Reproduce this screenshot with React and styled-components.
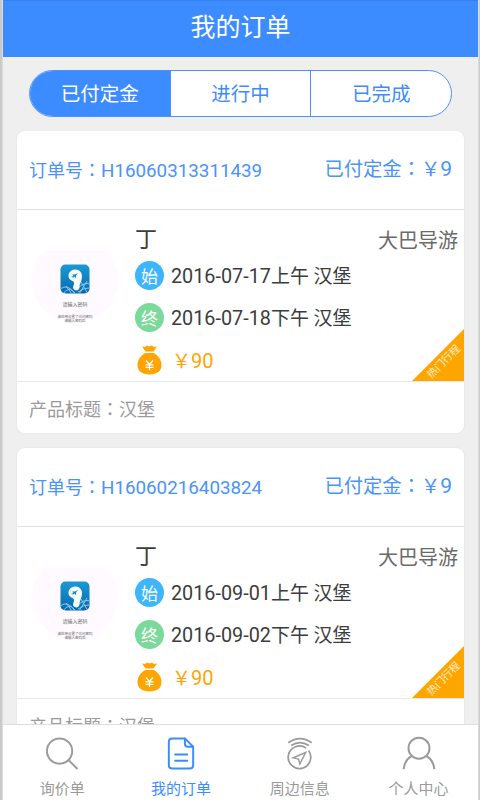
import React from 'react'
import styled, { createGlobalStyle, css } from 'styled-components'

const GlobalStyle = createGlobalStyle`
  * {
    box-sizing: border-box;
  }
  body {
    margin: 0;
    background-color: #c9c9c9;
    font-family: Roboto, "Noto Sans CJK SC", sans-serif;
  }
`
const Container = styled.div`
  width: 475px;
  height: 800px;
  margin-left: 3px;
  display: flex;
  flex-direction: column;
  overflow: hidden;
  background-color: #efefef;
  box-shadow: 0 0 1px 1px #dcdcdc;
`
const Header = styled.header`
  height: 57px;
  flex-shrink: 0;
  display: flex;
  align-items: center;
  justify-content: center;
  padding-bottom: 8px;
  border-top: 1px solid #3a80ec;
  background-color: #3c8cff;
  color: white;
  font-size: 25px;
`
const Tabs = styled.div`
  height: 47px;
  flex-shrink: 0;
  display: flex;
  margin: 13px 26px 14px;
  border: 1.5px solid #4a93fb;
  border-radius: 24px;
  overflow: hidden;
  background-color: white;
`
const Tab = styled.div`
  flex: 1;
  display: flex;
  align-items: center;
  justify-content: center;
  padding-bottom: 2px;
  font-size: 19.5px;
  color: #3c8cff;
  & + & {
    border-left: 1px solid #4a93fb;
  }
  ${props => props.$active && css`
    background-color: #3c8cff;
    color: white;
  `}
`
const Orders = styled.div`
  flex: 1;
  min-height: 0;
  overflow: hidden;
  padding: 0 14px;
`
const Card = styled.div`
  height: 302px;
  margin-bottom: 15px;
  border-radius: 8px;
  background-color: white;
  box-shadow: 0 0 1px 1px #e9e9e9;
`
const CardHead = styled.div`
  height: 79px;
  display: flex;
  align-items: center;
  justify-content: space-between;
  padding: 0 12px;
  border-bottom: 1px solid #e2e2e2;
  color: #4a93fb;
`
const OrderNo = styled.div`
  padding-bottom: 3px;
  font-size: 18px;
`
const Deposit = styled.div`
  font-size: 19.3px;
  padding-bottom: 5px;
`
const Colon = styled.span`
  font-family: "Noto Sans CJK TC", sans-serif;
`
const Num = styled.span`
  font-size: ${props => props.$size};
`
const CardBody = styled.div`
  position: relative;
  height: 172px;
  display: flex;
  border-bottom: 1px solid #e8e8e8;
`
const Avatar = styled.div`
  width: 86px;
  height: 86px;
  flex-shrink: 0;
  margin: 27px 17px 0 15px;
  padding-top: 27px;
  border-radius: 50%;
  display: flex;
  flex-direction: column;
  align-items: center;
  background: linear-gradient(white 14px, #fefaff 14px);
  svg {
    flex-shrink: 0;
  }
`
const AvatarText = styled.span`
  flex-shrink: 0;
  white-space: nowrap;
  line-height: ${props => props.$line};
  font-size: ${props => props.$size};
  margin-top: ${props => props.$top};
  color: #666;
`
const Details = styled.div`
  flex: 1;
  padding-top: 14px;
`
const NameRow = styled.div`
  height: 30px;
  display: flex;
  align-items: center;
  justify-content: space-between;
  padding: 0 6px 4px 0;
  font-size: 22px;
  color: #3c3c3c;
`
const Guide = styled.span`
  padding-top: 4px;
  font-size: 20px;
  color: #6a6a6a;
`
const Row = styled.div`
  height: 42.5px;
  display: flex;
  align-items: center;
  font-size: 19px;
  color: #3c3c3c;
`
const RowText = styled.span`
  padding-bottom: 2px;
`
const Badge = styled.span`
  width: 29px;
  height: 29px;
  margin-right: 7px;
  display: flex;
  align-items: center;
  justify-content: center;
  border-radius: 50%;
  font-size: 17px;
  color: white;
  background-color: ${props => props.$color};
`
const Price = styled.span`
  margin-left: 8px;
  padding-bottom: 2px;
  color: #ffa500;
`
const Ribbon = styled.div`
  position: absolute;
  right: 0;
  bottom: 0;
  width: 52px;
  height: 52px;
  background-color: #ffa500;
  clip-path: polygon(100% 0, 100% 100%, 0 100%);
`
const RibbonText = styled.span`
  position: absolute;
  left: 9px;
  top: 25px;
  width: 46px;
  line-height: 16px;
  text-align: center;
  font-size: 10.5px;
  color: #ffedcc;
  transform: rotate(-45deg);
`
const CardFoot = styled.div`
  height: 51px;
  display: flex;
  align-items: center;
  padding: 1px 12px 0;
  font-size: 18px;
  color: #9b9b9b;
`
const Nav = styled.nav`
  height: 76px;
  flex-shrink: 0;
  display: flex;
  border-top: 1px solid #dedede;
  background-color: white;
`
const NavItem = styled.div`
  flex: 1;
  display: flex;
  flex-direction: column;
  align-items: center;
  padding-top: 11px;
  font-size: 15px;
  line-height: 22px;
  color: ${props => props.$active ? '#3c8cff' : '#9a9a9a'};
  svg {
    margin-bottom: 7px;
  }
`

const AppLogo = () => (
  <svg width="30" height="30" viewBox="0 0 30 30">
    <defs>
      <linearGradient id="logoBg" x1="0" y1="0" x2="0" y2="1">
        <stop offset="0" stopColor="#1b9ad6" />
        <stop offset="1" stopColor="#0768ae" />
      </linearGradient>
      <clipPath id="logoClip">
        <rect x="0.5" y="0.5" width="29" height="29" rx="5" />
      </clipPath>
    </defs>
    <g clipPath="url(#logoClip)">
      <rect width="30" height="30" fill="url(#logoBg)" />
      <path d="M0 25q8-6 15 5M3 30q6-9 12-1M18 24q6-6 12-4M18 28q7-5 12-4M21 18l7 12M27 17l-8 13M6 22l6 8" fill="none" stroke="#8cc9e8" strokeWidth="1" />
      <path d="M8.500 12C8.500 8 11.500 5.500 15.500 5.500S22 8.500 22 12c0 5-2.500 8-2.500 11 0 2-1.500 3.500-3 3.500S13 25.500 13 23.500c0-2 1.500-3 1-5-.5-2-5.500-2-5.500-6.500z" fill="#f4fbfb" />
      <path d="M10.500 13l3-1.500-1.500-1 3 0 3-1.500-2 2.500 0 3-1.200-2-2.300 1.500.5-1.500z" fill="#1581c0" />
    </g>
  </svg>
)

const MoneyBag = () => (
  <svg width="29" height="30" viewBox="0 0 29 30">
    <path d="M7 1.500l3 .5 2-1.500 2.500 1 2.500-1 2 1.500 3-.5-3.500 5h-8z" fill="#ffa500" />
    <path d="M10 8h9c4.500 3 7.500 7 7.500 12 0 6-4.500 9.500-12 9.500s-12-3.500-12-9.500c0-5 3-9 7.500-12z" fill="#ffa500" />
    <path d="M11 15.500l3.500 4L18 15.500M10.500 19.800h8M10.500 22.300h8M14.500 19.500v5.500" fill="none" stroke="white" strokeWidth="1.300" />
  </svg>
)

const SearchIcon = () => (
  <svg width="36" height="36" viewBox="0 0 36 36" fill="none" stroke="currentColor" strokeWidth="2">
    <circle cx="15.500" cy="15.500" r="13" />
    <path d="M24.500 24.500l9.500 9.500" />
  </svg>
)

const OrderIcon = () => (
  <svg width="36" height="36" viewBox="0 0 36 36" fill="none" stroke="currentColor" strokeWidth="2" strokeLinejoin="round" strokeLinecap="round">
    <path d="M22 2.500H9Q5.500 2.500 5.500 6v24Q5.500 33.500 9 33.500h18Q30.500 33.500 30.500 30V11z" />
    <path d="M22 2.500V8q0 3 3 3h5.500M12 19h12.500M12 25.500h12.500" />
  </svg>
)

const NearbyIcon = () => (
  <svg width="36" height="36" viewBox="0 0 36 36" fill="none" stroke="currentColor" strokeWidth="1.800">
    <path d="M6 7q12-8.500 24 0M9 9.800q9-6 18 0" />
    <path d="M24.300 12.500A11.600 11.600 0 1 0 26.800 15" />
    <path d="M23.800 17L11 22.500l5.500 1.300 1.300 5z" strokeWidth="1.500" />
  </svg>
)

const UserIcon = () => (
  <svg width="36" height="36" viewBox="0 0 36 36" fill="none" stroke="currentColor" strokeWidth="2">
    <circle cx="18" cy="12.500" r="10.800" />
    <path d="M2.200 34Q3 25 10.500 20.500M33.800 34Q33 25 25.500 20.500" />
  </svg>
)

const orders = [
  { no: 'H16060313311439', start: '2016-07-17', end: '2016-07-18' },
  { no: 'H16060216403824', start: '2016-09-01', end: '2016-09-02' },
]

const Order = ({ order }) => (
  <Card>
    <CardHead>
      <OrderNo>订单号<Colon>{'\uFF1A'}</Colon><Num $size="18.800px">{order.no}</Num></OrderNo>
      <Deposit>已付定金<Colon>{'\uFF1A'}</Colon>{'\uFFE5'}<Num $size="21px">9</Num></Deposit>
    </CardHead>
    <CardBody>
      <Avatar>
        <AppLogo />
        <AvatarText $size="5px" $line="5px" $top="8px">请输入密码</AvatarText>
        <AvatarText $size="3.500px" $line="4px" $top="8px">该应用设置了访问密码</AvatarText>
        <AvatarText $size="3.500px" $line="4px" $top="0">请输入密码后</AvatarText>
      </Avatar>
      <Details>
        <NameRow>丁<Guide>大巴导游</Guide></NameRow>
        <Row><Badge $color="#3db5ff">始</Badge><RowText><Num $size="19.800px">{order.start}</Num>上午 汉堡</RowText></Row>
        <Row><Badge $color="#7bd99b">终</Badge><RowText><Num $size="19.800px">{order.end}</Num>下午 汉堡</RowText></Row>
        <Row><MoneyBag /><Price>{'\uFFE5'}<Num $size="20px">90</Num></Price></Row>
      </Details>
      <Ribbon><RibbonText>热门行程</RibbonText></Ribbon>
    </CardBody>
    <CardFoot>产品标题<Colon>{'\uFF1A'}</Colon>汉堡</CardFoot>
  </Card>
)

const App = () => {
  return (
    <>
      <GlobalStyle />
      <Container>
        <Header>我的订单</Header>
        <Tabs>
          <Tab $active>已付定金</Tab>
          <Tab>进行中</Tab>
          <Tab>已完成</Tab>
        </Tabs>
        <Orders>
          {orders.map(order => <Order key={order.no} order={order} />)}
        </Orders>
        <Nav>
          <NavItem><SearchIcon />询价单</NavItem>
          <NavItem $active><OrderIcon />我的订单</NavItem>
          <NavItem><NearbyIcon />周边信息</NavItem>
          <NavItem><UserIcon />个人中心</NavItem>
        </Nav>
      </Container>
    </>
  )
}

export default App
